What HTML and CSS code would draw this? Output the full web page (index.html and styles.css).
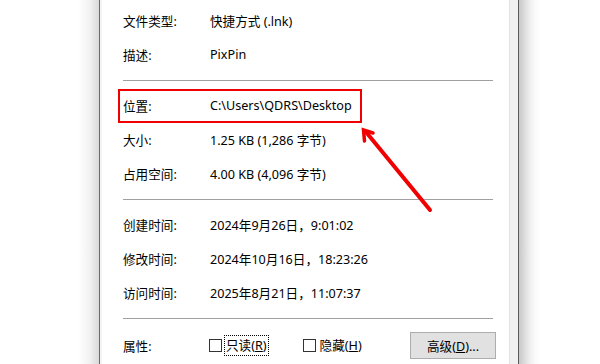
FILE: index.html
```html
<!DOCTYPE html>
<html lang="zh-CN">
<head>
<meta charset="utf-8">
<link rel="stylesheet" href="styles.css">
</head>
<body>
<div class="screen">
  <div class="shade-left"></div>
  <div class="dialog">
    <div class="page">
      <div class="row"><span class="label">文件类型:</span><span class="value">快捷方式 (.lnk)</span></div>
      <div class="row"><span class="label">描述:</span><span class="value">PixPin</span></div>
      <div class="sep"></div>
      <div class="row"><span class="label">位置:</span><span class="value">C:\Users\QDRS\Desktop</span></div>
      <div class="row"><span class="label">大小:</span><span class="value">1.25 KB (1,286 字节)</span></div>
      <div class="row"><span class="label">占用空间:</span><span class="value">4.00 KB (4,096 字节)</span></div>
      <div class="sep"></div>
      <div class="row"><span class="label">创建时间:</span><span class="value">2024年9月26日，9:01:02</span></div>
      <div class="row"><span class="label">修改时间:</span><span class="value">2024年10月16日，18:23:26</span></div>
      <div class="row"><span class="label">访问时间:</span><span class="value">2025年8月21日，11:07:37</span></div>
      <div class="sep"></div>
      <div class="attr-row">
        <span class="label">属性:</span>
        <label class="check first"><span class="box"></span><span class="check-text focus">只读(<u>R</u>)</span></label>
        <label class="check second"><span class="box"></span><span class="check-text">隐藏(<u>H</u>)</span></label>
        <button class="btn">高级(<u>D</u>)...</button>
      </div>
    </div>
    <div class="frame-right"></div>
  </div>
  <div class="shade-right"></div>
  <svg class="annot" width="600" height="364" viewBox="0 0 600 364">
    <rect x="119" y="90" width="242" height="32" fill="none" stroke="#f00000" stroke-width="2"/>
    <line x1="430" y1="210" x2="366" y2="132" stroke="#f00000" stroke-width="4" stroke-linecap="round"/>
    <polyline points="364.5,141 363.5,130 373,133" fill="none" stroke="#f00000" stroke-width="3.5" stroke-linecap="round" stroke-linejoin="miter"/>
  </svg>
</div>
</body>
</html>
```
FILE: styles.css
```css
* { box-sizing: border-box; }
html, body { margin: 0; padding: 0; background: #fff; }
.screen {
  position: relative;
  width: 600px;
  height: 364px;
  display: flex;
  overflow: hidden;
  font-family: "Noto Sans", "Noto Sans CJK SC", sans-serif;
  font-size: 12.6px;
  color: #000;
}
.shade-left {
  width: 99px;
  flex: none;
  background: linear-gradient(to right, #fff 0, #fff 78px, #f1f1f1 90px, #d9d9d9 99px);
}
.dialog {
  width: 420px;
  flex: none;
  display: flex;
  border-left: 1px solid #6b6b6b;
  border-right: 1px solid #5a5a5a;
}
.page {
  width: 409px;
  flex: none;
  background: #fff;
  border-left: 2px solid #f4f4f4;
  padding: 3px 16px 0 21px;
  display: flex;
  flex-direction: column;
}
.frame-right {
  flex: 1;
  background: #f0f0f0;
  border-left: 1px solid #e2e2e2;
}
.shade-right {
  flex: 1;
  background: linear-gradient(to right, #c8c8c8 0, #ececec 10px, #fafafa 16px, #fff 22px);
}
.row {
  display: flex;
  height: 34px;
  align-items: center;
  white-space: nowrap;
}
.label { width: 87px; flex: none; }
.value { flex: none; }
.sep {
  height: 1px;
  background: #a0a0a0;
  margin: 9px 0 7px 0;
  flex: none;
}
.attr-row {
  display: flex;
  align-items: center;
  height: 38px;
  white-space: nowrap;
}
.check { display: flex; align-items: center; }
.check.first { margin-left: -1px; }
.check.second { margin-left: 34px; }
.box {
  width: 13px;
  height: 13px;
  border: 1px solid #333;
  background: #fff;
  flex: none;
  margin-right: 2px;
}
.check-text { padding: 1px 1px; border: 1px solid transparent; line-height: 17px; }
.check-text.focus { border: 1px dotted #000; }
.btn {
  margin-left: auto;
  margin-right: -3px;
  width: 86px;
  height: 27px;
  background: #e1e1e1;
  border: 1px solid #adadad;
  font: inherit;
  color: #000;
  padding: 0;
}
u { text-decoration: underline; text-underline-offset: 1px; }
.annot { position: absolute; left: 0; top: 0; pointer-events: none; }
```
